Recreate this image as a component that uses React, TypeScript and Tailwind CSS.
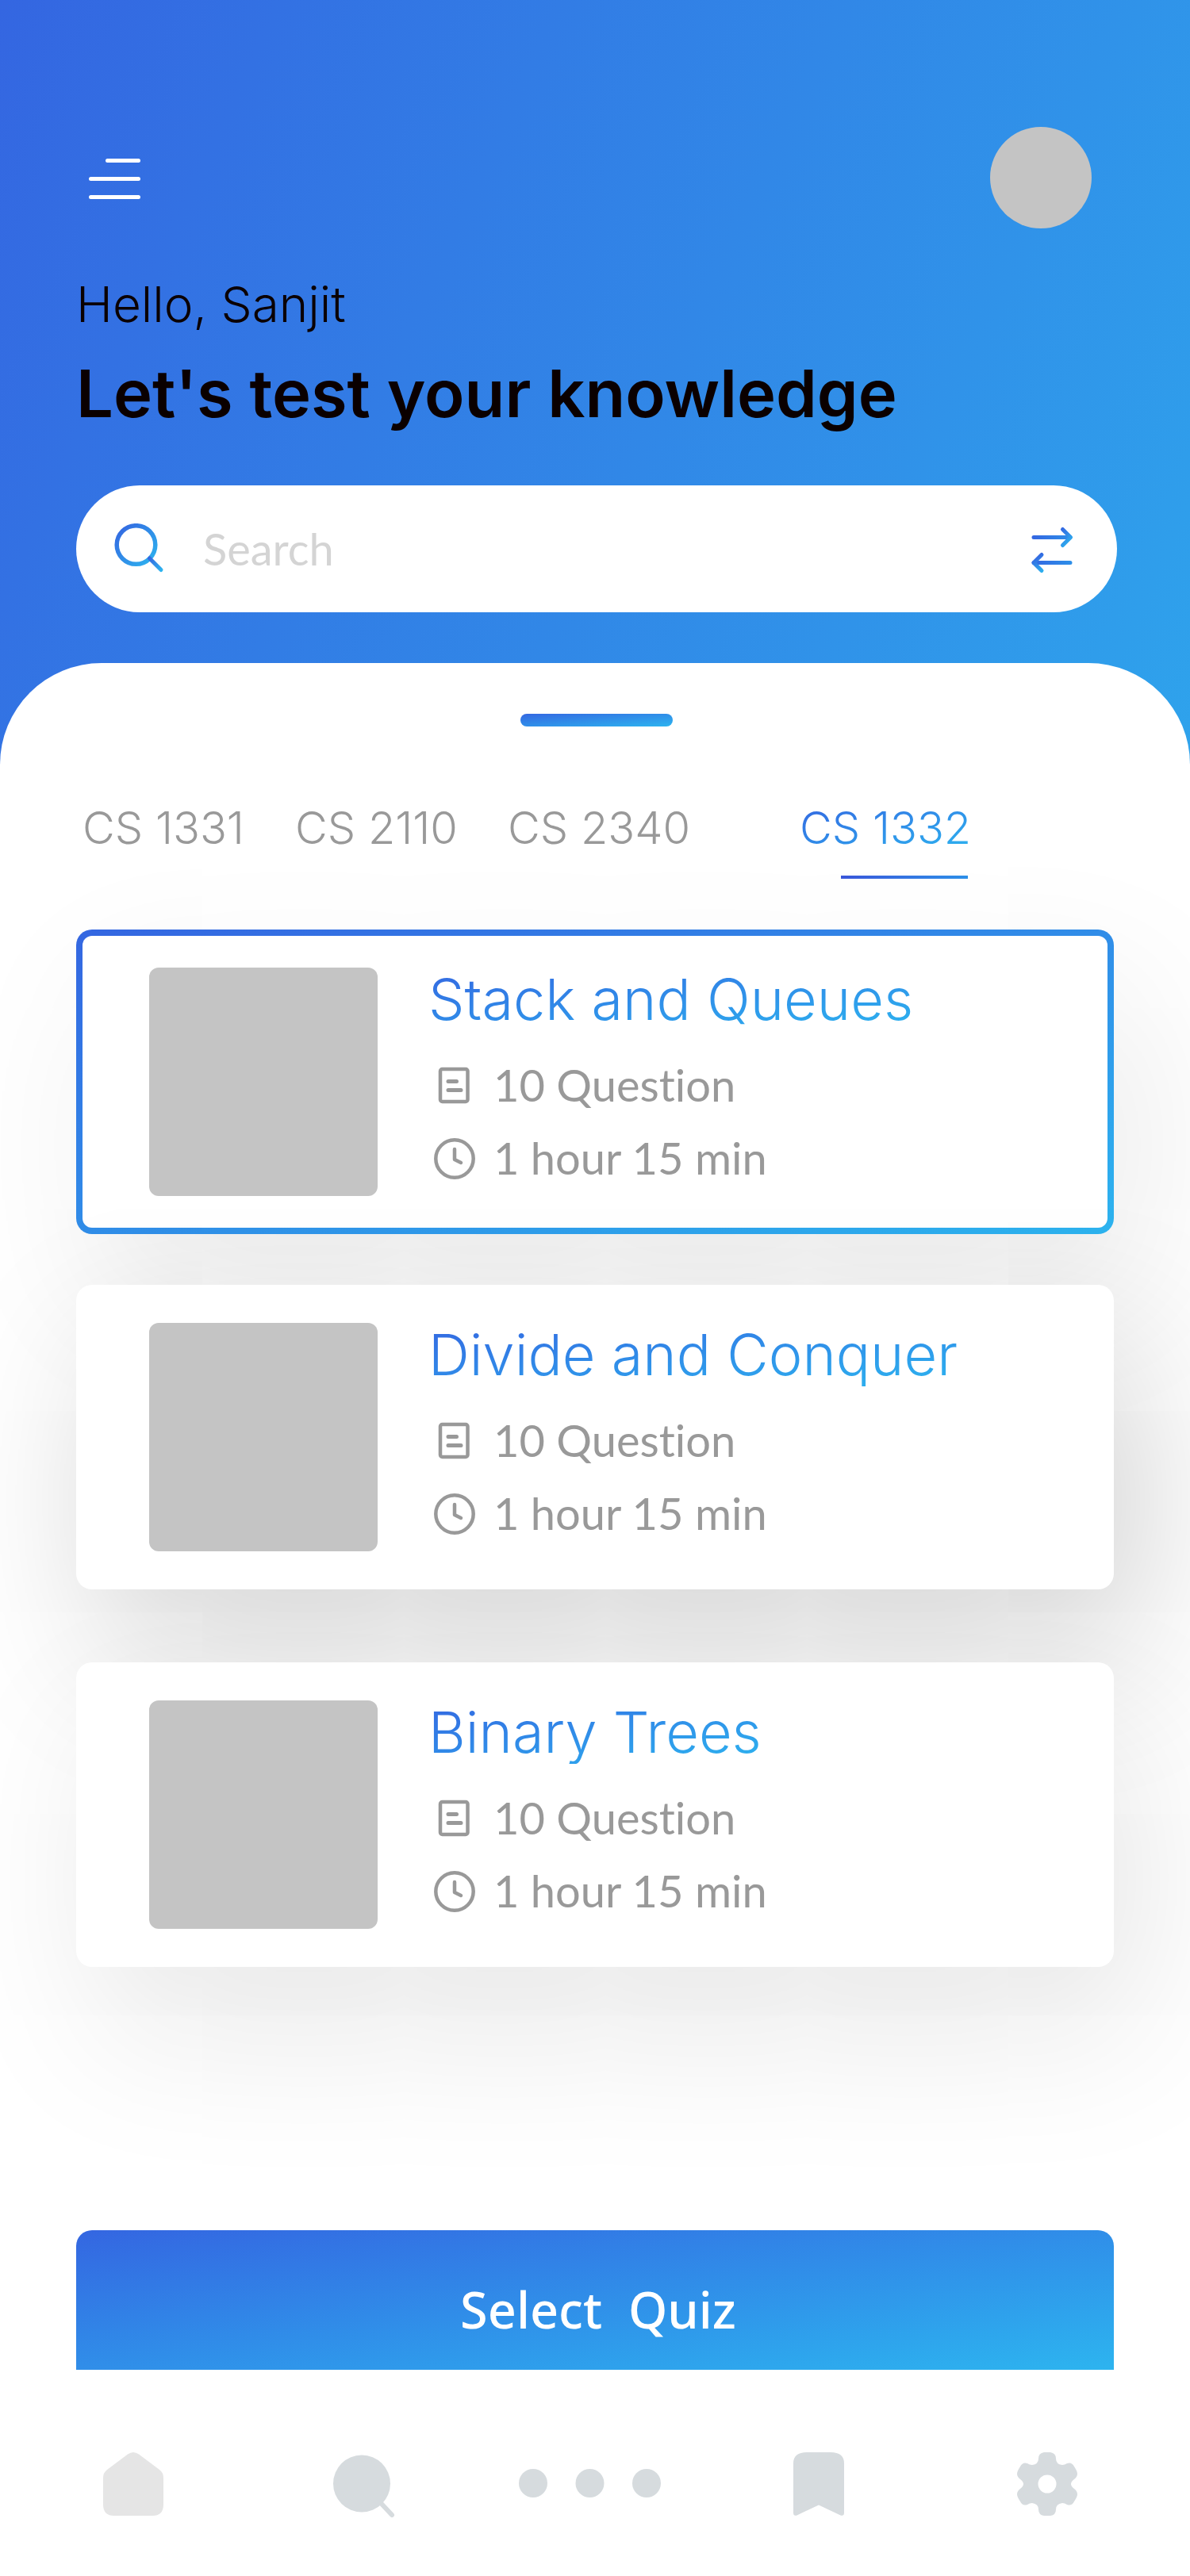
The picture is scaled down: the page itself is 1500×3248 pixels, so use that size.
import React from "react";

type Quiz = {
  title: string;
  questions: string;
  duration: string;
  className: string;
};

const courses = ["CS 1331", "CS 2110", "CS 2340", "CS 1332"];
const activeCourse = "CS 1332";

const quizzes: Quiz[] = [
  {
    title: "Stack and Queues",
    questions: "10 Question",
    duration: "1 hour 15 min",
    className:
      "mt-16 [background:linear-gradient(#fff,#fff)_padding-box,linear-gradient(to_bottom_right,#3466e1,#2db4ef)_border-box] shadow-[32px_80px_200px_rgba(0,0,0,0.09)]",
  },
  {
    title: "Divide and Conquer",
    questions: "10 Question",
    duration: "1 hour 15 min",
    className: "mt-16 bg-white shadow-[32px_80px_200px_rgba(0,0,0,0.18)]",
  },
  {
    title: "Binary Trees",
    questions: "10 Question",
    duration: "1 hour 15 min",
    className: "mt-[92px] bg-white shadow-[32px_80px_200px_rgba(0,0,0,0.1)]",
  },
];

function MenuIcon() {
  return (
    <svg className="h-14 w-[66px]" viewBox="0 0 66 56" fill="none" stroke="#fff" strokeWidth="5" strokeLinecap="round">
      <path d="M23.5 6.5H62.5M2.5 29.5H62.5M2.5 52.5H62.5" />
    </svg>
  );
}

function SearchIcon() {
  return (
    <svg className="h-16 w-17 shrink-0" viewBox="0 0 68 64" fill="none" strokeWidth="5.5" strokeLinecap="round" aria-hidden="true">
      <defs>
        <linearGradient id="lens" gradientUnits="userSpaceOnUse" x1="8" y1="4" x2="55" y2="51">
          <stop stopColor="#3466e1" />
          <stop offset="1" stopColor="#2db4ef" />
        </linearGradient>
        <linearGradient id="grip" gradientUnits="userSpaceOnUse" x1="48" y1="43" x2="64" y2="59">
          <stop stopColor="#3466e1" />
          <stop offset="1" stopColor="#2db4ef" />
        </linearGradient>
      </defs>
      <circle cx="31.5" cy="27" r="24.3" stroke="url(#lens)" />
      <path d="M48.5 44L63 58.5" stroke="url(#grip)" strokeWidth="5" />
    </svg>
  );
}

function SwapIcon() {
  return (
    <svg className="h-14 w-15 overflow-visible" viewBox="0 0 60 56" fill="none" strokeWidth="5" strokeLinecap="round" strokeLinejoin="round">
      <defs>
        <linearGradient id="shaft" gradientUnits="userSpaceOnUse" x1="5" y1="0" x2="56" y2="0">
          <stop stopColor="#3466e1" />
          <stop offset="1" stopColor="#2d90e9" />
        </linearGradient>
        <linearGradient id="headRight" gradientUnits="userSpaceOnUse" x1="40" y1="4" x2="56" y2="20">
          <stop stopColor="#3466e1" />
          <stop offset="1" stopColor="#2db4ef" />
        </linearGradient>
        <linearGradient id="headLeft" gradientUnits="userSpaceOnUse" x1="6" y1="40" x2="18" y2="58">
          <stop stopColor="#3466e1" />
          <stop offset="1" stopColor="#2db4ef" />
        </linearGradient>
      </defs>
      <path d="M7 13.5H53M53 45.5H7" stroke="url(#shaft)" />
      <path d="M43.5 3.500L53.5 13.5L43.5 23.5" stroke="url(#headRight)" />
      <path d="M17 35.5L7 45.5L17 55.5" stroke="url(#headLeft)" />
    </svg>
  );
}

function DocumentIcon() {
  return (
    <svg className="size-16 shrink-0" viewBox="0 0 64 64" fill="none" stroke="#999" strokeWidth="4.5" strokeLinecap="round" aria-hidden="true">
      <rect x="15" y="12" width="34.5" height="41" rx="2.5" />
      <path d="M25 27.5H35.5M25 38.5H41" strokeWidth="5" />
    </svg>
  );
}

function ClockIcon() {
  return (
    <svg className="size-16 shrink-0" viewBox="0 0 64 64" fill="none" stroke="#999" strokeWidth="4.5" strokeLinecap="round" strokeLinejoin="round" aria-hidden="true">
      <circle cx="33" cy="33" r="23.7" />
      <path d="M33 21V34L41 38" />
    </svg>
  );
}

function QuizCard({ quiz }: { quiz: Quiz }) {
  return (
    <article className={`flex gap-16 rounded-[20px] border-8 border-transparent py-10 pr-10 pl-[84px] ${quiz.className}`}>
      <div className="size-72 shrink-0 rounded-xl bg-[#c4c4c4]" />
      <div className="min-w-0">
        <h2 className="w-fit bg-linear-to-br from-[#3466e1] to-[#2db4ef] bg-clip-text font-[Inter,sans-serif] text-[72px] leading-[80px] font-[350] whitespace-nowrap text-transparent">
          {quiz.title}
        </h2>
        <div className="mt-9 flex flex-col gap-7 font-[Lato,sans-serif] text-[56px] leading-[64px] whitespace-nowrap text-[#999] [font-variant-ligatures:none]">
          <p className="flex items-center gap-[18px]">
            <DocumentIcon />
            {quiz.questions}
          </p>
          <p className="flex items-center gap-[18px]">
            <ClockIcon />
            {quiz.duration}
          </p>
        </div>
      </div>
    </article>
  );
}

const navItems: { label: string; icon: React.ReactNode }[] = [
  {
    label: "Home",
    icon: (
      <svg className="h-20 w-19" viewBox="0 0 76 80" fill="#e5e5e5">
        <path d="M31 2.500Q38 -2.500 45 2.500L71 22Q76 26 76 32V66Q76 80 62 80H14Q0 80 0 66V32Q0 26 5 22Z" />
      </svg>
    ),
  },
  {
    label: "Search",
    icon: (
      <svg className="h-21 w-20 overflow-visible" viewBox="-2 0 80 84" fill="#d6dbde" stroke="#d6dbde">
        <circle cx="38" cy="39.500" r="36" stroke="none" />
        <path d="M62 64L76 79" strokeWidth="6" strokeLinecap="round" />
      </svg>
    ),
  },
  {
    label: "More",
    icon: (
      <svg className="h-20 w-45" viewBox="0 0 180 80" fill="#d6dbde">
        <circle cx="18" cy="39" r="18" />
        <circle cx="89.5" cy="39" r="18" />
        <circle cx="161" cy="39" r="18" />
      </svg>
    ),
  },
  {
    label: "Bookmarks",
    icon: (
      <svg className="h-20 w-16" viewBox="0 0 64 80" fill="#d6dbde">
        <path d="M0 14Q0 0 17 0H47Q64 0 64 14V76Q64 81 59.5 79.5L32 66.5L4.5 79.5Q0 81 0 76Z" />
      </svg>
    ),
  },
  {
    label: "Settings",
    icon: (
      <svg className="h-20 w-19" viewBox="0 0 76 80" fill="#d6dbde" fillRule="evenodd">
        <path d="M34 0H42Q49 1 49 8Q49 15 57 16Q60 16 63 14Q69 12 72 18Q76 24 76 27Q76 31 72 34Q68 37 68 40Q68 43 72 46Q76 49 76 53Q76 56 72 62Q69 68 63 66Q60 64 57 64Q49 65 49 72Q49 79 42 80H34Q27 79 27 72Q27 65 19 64Q16 64 13 66Q7 68 4 62Q0 56 0 53Q0 49 4 46Q8 43 8 40Q8 37 4 34Q0 31 0 27Q0 24 4 18Q7 12 13 14Q16 16 19 16Q27 15 27 8Q27 1 34 0ZM38 28.5A11.5 11.5 0 1 0 38 51.5A11.5 11.5 0 1 0 38 28.5Z" />
      </svg>
    ),
  },
];

export default function App() {
  return (
    <div className="flex min-h-screen flex-col overflow-hidden bg-linear-[115deg] from-[#3466e1] to-[#2db4ef] to-83%">
      <header className="px-24 pt-40 pb-16">
        <div className="flex items-center justify-between pr-7 pl-4">
          <button type="button" aria-label="Open menu">
            <MenuIcon />
          </button>
          <button type="button" aria-label="Profile" className="size-32 rounded-full bg-[#c4c4c4]" />
        </div>
        <p className="mt-15 font-[Inter,sans-serif] text-[62px] leading-[72px] font-[350] text-[#0a0000]">Hello, Sanjit</p>
        <h1 className="mt-7 font-[Inter,sans-serif] text-[83px] leading-[96px] font-semibold text-[#0a0000]">
          Let's test your knowledge
        </h1>
        <form className="mt-17 -mr-1 flex h-40 items-center rounded-full bg-white pr-13 pl-11" role="search">
          <SearchIcon />
          <input
            type="text"
            aria-label="Search"
            placeholder="Search"
            className="ml-12 min-w-0 flex-1 bg-transparent font-[Lato,sans-serif] text-[56px] leading-[64px] text-[#999] outline-none placeholder:text-[#d4d4d4]"
          />
          <button type="button" aria-label="Swap filters">
            <SwapIcon />
          </button>
        </form>
      </header>

      <main className="flex flex-1 flex-col rounded-t-[128px] bg-white px-24 pt-16">
        <div className="ml-1 h-4 w-48 self-center rounded-full bg-linear-to-br from-[#3466e1] to-[#2db4ef]" />

        <nav aria-label="Courses" className="mt-24 grid grid-cols-[268fr_268fr_368fr_396fr] pl-2 font-[Inter,sans-serif] text-[56px] leading-[64px] font-[350] whitespace-nowrap">
          {courses.map((course) =>
            course === activeCourse ? (
              <button key={course} type="button" aria-current="true" className="flex w-fit flex-col items-end">
                <span className="bg-linear-to-br from-[#3466e1] to-[#2db4ef] bg-clip-text text-transparent">{course}</span>
                <span className="mt-7 mr-1 h-1 w-40 bg-linear-to-r from-[#3a57db] to-[#2d90e9]" />
              </button>
            ) : (
              <button key={course} type="button" className="w-fit self-start text-[#999]">
                {course}
              </button>
            ),
          )}
        </nav>

        {quizzes.map((quiz) => (
          <QuizCard key={quiz.title} quiz={quiz} />
        ))}

        <button
          type="button"
          className="mt-83 h-44 rounded-t-[20px] bg-linear-to-br from-[#3466e1] to-[#2db4ef] pt-6 pl-2 font-[Noto_Sans,sans-serif] text-[63px] font-medium whitespace-pre text-white"
        >
          {"Select  Quiz"}
        </button>
      </main>

      <nav aria-label="Main" className="grid h-65 grid-cols-5 items-start bg-white pt-26 pr-9 pl-6">
        {navItems.map((item) => (
          <button key={item.label} type="button" aria-label={item.label} className="justify-self-center">
            {item.icon}
          </button>
        ))}
      </nav>
    </div>
  );
}
